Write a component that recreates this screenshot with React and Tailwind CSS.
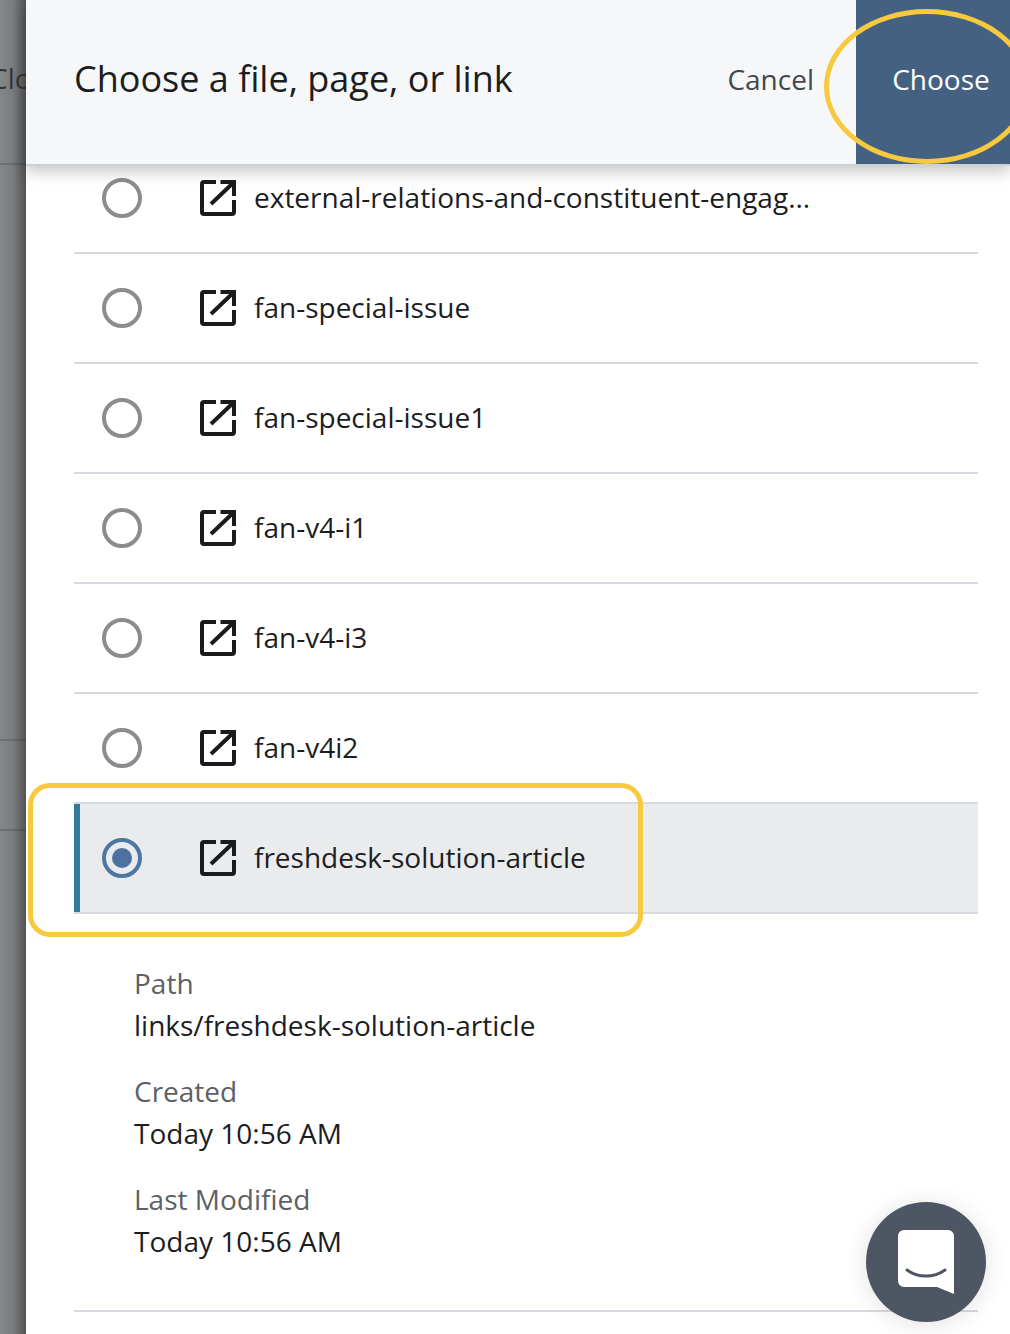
const rows = [
  { name: "fan-special-issue" },
  { name: "fan-special-issue1" },
  { name: "fan-v4-i1" },
  { name: "fan-v4-i3" },
  { name: "fan-v4i2" },
];

const details = [
  { label: "Path", value: "links/freshdesk-solution-article" },
  { label: "Created", value: "Today 10:56 AM" },
  { label: "Last Modified", value: "Today 10:56 AM" },
];

function LinkIcon() {
  return (
    <svg width="36" height="36" viewBox="0 0 36 36" fill="none" stroke="#1a1b1d" strokeWidth="4" className="shrink-0">
      <path d="M16 2H4a2 2 0 0 0-2 2V32a2 2 0 0 0 2 2H32a2 2 0 0 0 2-2V20" />
      <path d="M20.500 2H34V16" />
      <path d="M11 24L33 3" />
    </svg>
  );
}

function Radio({ checked }) {
  if (checked) {
    return (
      <div className="flex h-10 w-10 shrink-0 items-center justify-center rounded-full border-4 border-[#4d77a3]">
        <div className="h-5 w-5 rounded-full bg-[#4d71a0]" />
      </div>
    );
  }
  return <div className="h-10 w-10 shrink-0 rounded-full border-4 border-[#8b8c8e]" />;
}

function RowBody({ name, checked }) {
  return (
    <>
      <Radio checked={checked} />
      <div className="ml-[58px]">
        <LinkIcon />
      </div>
      <span className="mb-[2px] ml-[18px] text-[28px] text-[#1c1d1f]">{name}</span>
    </>
  );
}

export default function App() {
  return (
    <div className="relative flex h-[1334px] w-[1010px] overflow-hidden bg-white font-['Open_Sans','Noto_Sans',sans-serif]">
      {/* dimmed page behind the drawer */}
      <div className="flex w-[26px] shrink-0 flex-col overflow-hidden bg-gradient-to-r from-[#858687] via-[#7b7c7d] to-[#525354]">
        <div className="flex h-[165px] shrink-0 items-center border-b-2 border-black/15 pb-[7px]">
          <span className="ml-[-10px] whitespace-nowrap text-[28px] text-[#333436]">Close</span>
        </div>
        <div className="h-[576px] shrink-0 border-b-2 border-black/15" />
        <div className="h-[90px] shrink-0 border-b-2 border-black/15" />
      </div>

      <div className="flex min-w-0 flex-1 flex-col">
        <header className="relative z-10 flex h-[166px] shrink-0 items-stretch border-b-2 border-[#cfd2d4] bg-[#f6f7f9] shadow-[0_6px_14px_rgba(0,0,0,0.22)]">
          <h1 className="flex flex-1 items-center pb-[7px] pl-[48px] text-[36px] font-normal text-[#1c1d1f]">
            Choose a file, page, or link
          </h1>
          <button className="pb-[7px] pr-[42px] text-[28px] text-[#45474a]">Cancel</button>
          <button className="w-[154px] bg-[#456182] pb-[7px] pl-[16px] text-[28px] text-white">Choose</button>
        </header>

        <div className="flex flex-1 flex-col pl-[48px] pr-[32px]">
          {/* top row is scrolled under the header */}
          <div className="flex h-[88px] items-center border-b-2 border-[#d7dade] pb-[22px] pl-[28px]">
            <RowBody name="external-relations-and-constituent-engag..." />
          </div>

          {rows.map((row) => (
            <div key={row.name} className="flex h-[110px] items-center border-b-2 border-[#d7dade] pl-[28px]">
              <RowBody name={row.name} />
            </div>
          ))}

          <div className="h-[110px] border-b-2 border-[#d7dade]">
            <div className="flex h-full items-center border-l-[6px] border-[#327a99] bg-[#eaebed] pl-[22px]">
              <RowBody name="freshdesk-solution-article" checked />
            </div>
          </div>

          <div className="flex h-[398px] flex-col gap-[24px] border-b-2 border-[#d7dade] pl-[60px] pt-[48px]">
            {details.map((item) => (
              <div key={item.label} className="text-[28px] leading-[42px]">
                <div className="text-[#5d6064]">{item.label}</div>
                <div className="text-[#1c1d1f]">{item.value}</div>
              </div>
            ))}
          </div>
        </div>
      </div>

      {/* yellow annotations */}
      <div className="absolute left-[824px] top-[9px] z-20 h-[155px] w-[206px] rounded-[50%] border-[5px] border-[#f6c93f]" />
      <div className="absolute left-[28px] top-[783px] z-20 h-[154px] w-[615px] rounded-[22px] border-[5px] border-[#f8c93f]" />

      {/* chat launcher */}
      <div className="absolute left-[866px] top-[1202px] z-20 flex h-[120px] w-[120px] items-center justify-center rounded-full bg-[#4f5663] shadow-[0_2px_24px_rgba(0,0,0,0.12)]">
        <svg width="56" height="64" viewBox="0 0 56 64">
          <path d="M6 0H50a6 6 0 0 1 6 6V64L39 57H6a6 6 0 0 1-6-6V6a6 6 0 0 1 6-6Z" fill="#fff" />
          <path d="M9 40C20 48 36 48 47 40" fill="none" stroke="#4f5663" strokeWidth="3" strokeLinecap="round" />
        </svg>
      </div>
    </div>
  );
}
